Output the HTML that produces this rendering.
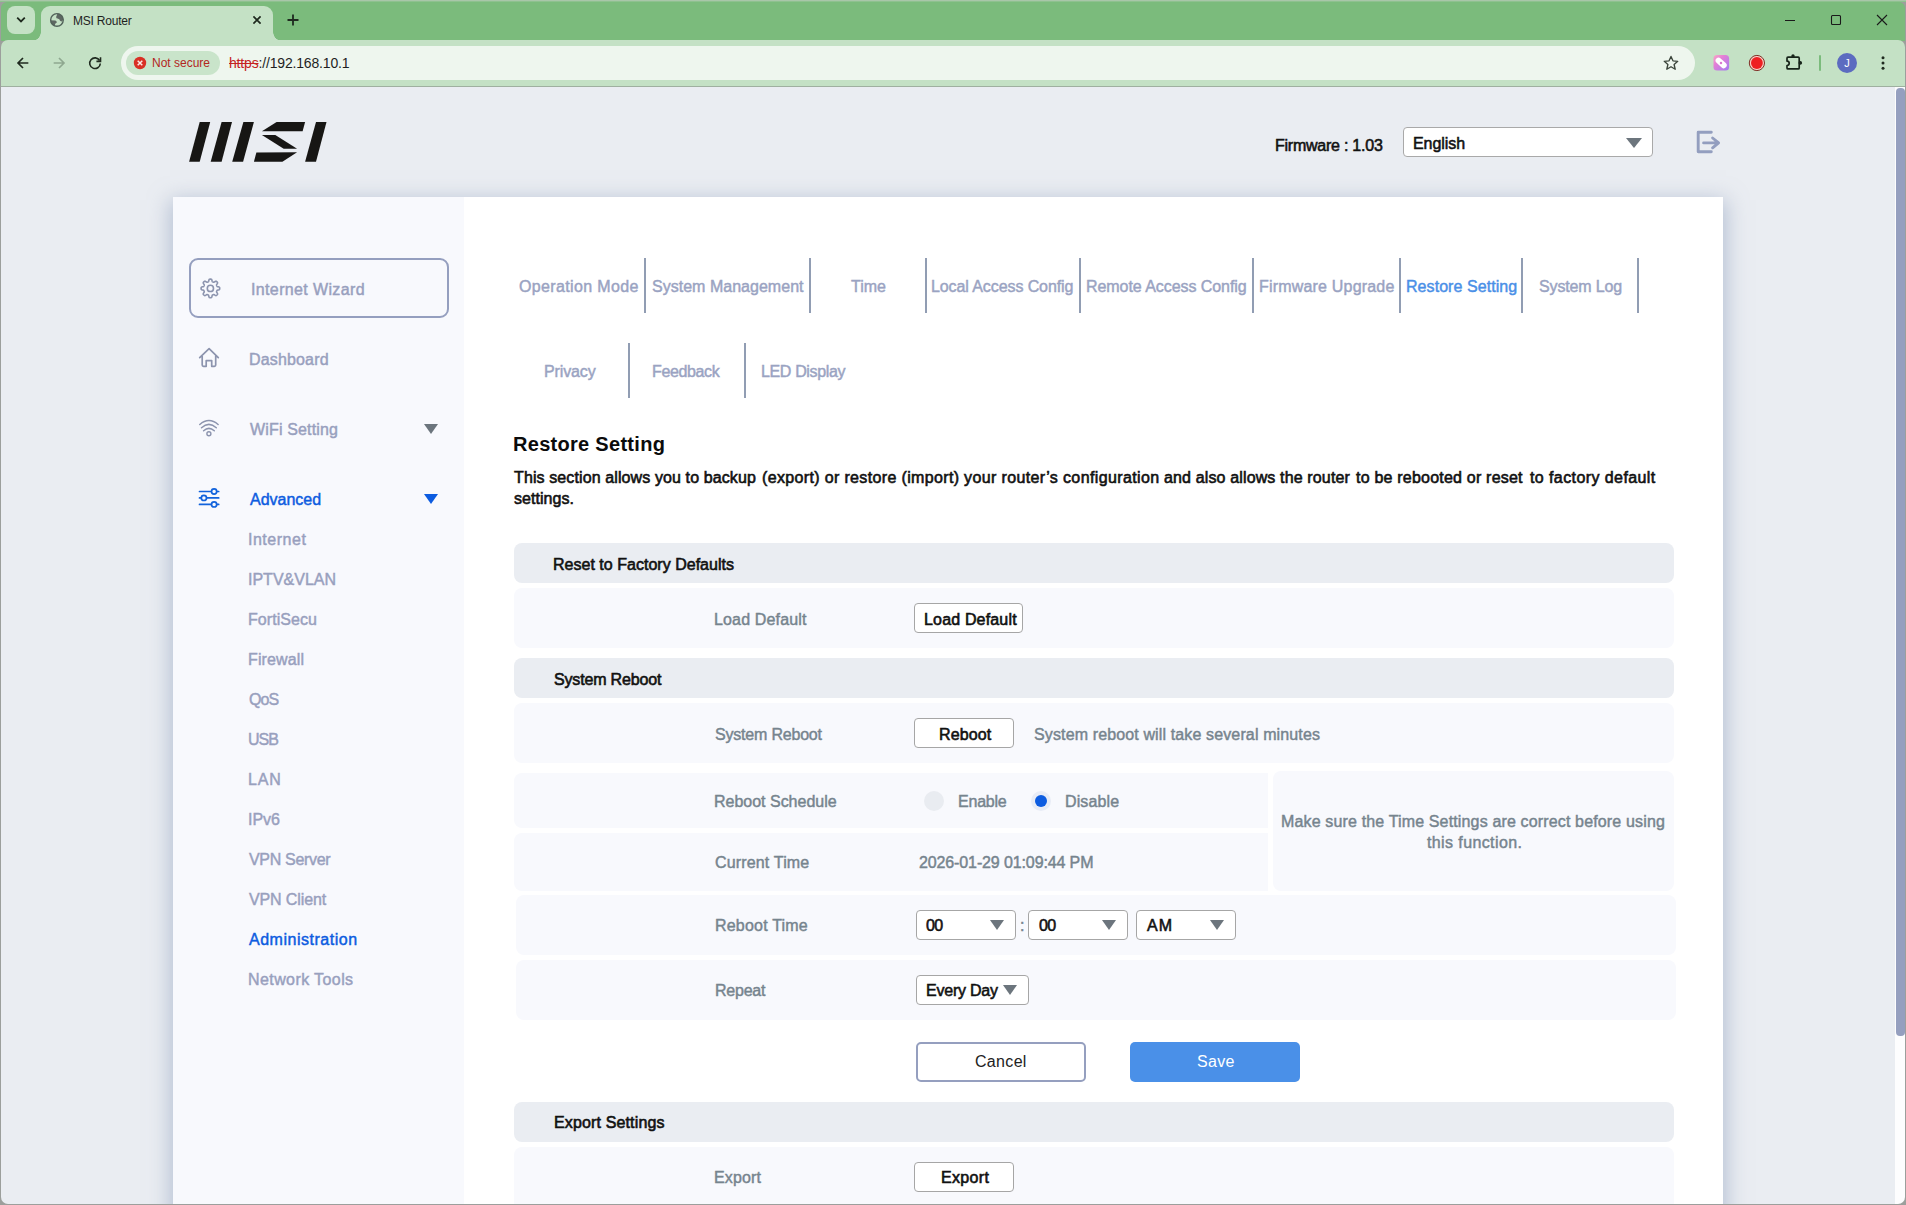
<!DOCTYPE html>
<html lang="en">
<head>
<meta charset="utf-8">
<title>MSI Router</title>
<style>
*{box-sizing:border-box;margin:0;padding:0}
html,body{width:1906px;height:1205px;overflow:hidden;background:#9c9f9c}
body{font-family:"Liberation Sans",sans-serif;font-size:16px;color:#111;position:relative}
#win{position:absolute;left:0;top:0;width:1906px;height:1205px;overflow:hidden;clip-path:inset(2px 1px 1px 1px round 6px 6px 7px 7px)}
.abs{position:absolute}
.t{position:absolute;white-space:nowrap;font-size:16px;line-height:20px;height:20px}
/* ---------- browser chrome ---------- */
#tabstrip{position:absolute;left:0;top:0;width:1906px;height:41px;background:#7bbb7c}
#toolbar{position:absolute;left:1px;top:40px;width:1904px;height:47px;background:#c4e1c5;border-bottom:1px solid #9fb0a0;border-radius:7px 7px 0 0}
#tabsearch{position:absolute;left:7px;top:6px;width:28px;height:28px;border-radius:8px;background:#c4e1c5}
#tab{position:absolute;left:41px;top:6px;width:232px;height:35px;background:#c4e1c5;border-radius:9px 9px 0 0}
#tab:before,#tab:after{content:"";position:absolute;bottom:0;width:9px;height:9px}
#tab:before{left:-9px;background:radial-gradient(circle at 0 0,transparent 8.5px,#c4e1c5 9px)}
#tab:after{right:-9px;background:radial-gradient(circle at 100% 0,transparent 8.5px,#c4e1c5 9px)}
#omni{position:absolute;left:121px;top:46px;width:1574px;height:34px;border-radius:17px;background:#eef6ee}
#chip{position:absolute;left:126px;top:51px;width:94px;height:24px;border-radius:12px;background:#c9e4ca}
.ch{font-size:12px;line-height:16px;height:16px}
/* ---------- page ---------- */
#page{position:absolute;left:1px;top:87px;width:1894px;height:1118px;background:#eaedf2;overflow:hidden}
#sbar{position:absolute;left:1895px;top:87px;width:10px;height:1118px;background:#fdfdfe}
#thumb{position:absolute;left:1895.500px;top:88px;width:9px;height:948px;border-radius:4px;background:#959fbf}
#card{position:absolute;left:173px;top:197px;width:1550px;height:1020px;background:#fff;box-shadow:0 6px 20px 3px rgba(128,148,182,.5)}
#side{position:absolute;left:0;top:0;width:291px;height:1100px;background:#f8f9fd}
.lg{position:absolute;left:0;top:0;width:146px;height:48px;background:#171614}
.sep{position:absolute;width:2px;height:55px;background:#919db3}
.hd{position:absolute;left:341px;width:1160px;height:40px;border-radius:8px;background:#eaedf2}
.row{position:absolute;left:341px;width:1160px;height:60px;border-radius:8px;background:#f8f9fd}
.btn{position:absolute;height:30px;border:1px solid #a6a6a6;border-radius:4px;background:#fff;text-align:center;font-size:16px;line-height:28px;color:#111}
.sel{position:absolute;height:30px;border:1px solid #a6a6a6;border-radius:4px;background:#fff;font-size:16px;line-height:28px;color:#111;padding-left:10px}
</style>
</head>
<body>
<div class="abs" style="left:0;top:0;width:1906px;height:2px;background:linear-gradient(#a9c6a9 50%,#8ec18f 50%)"></div>
<div id="win">
<!--PAGE-->
<div id="page"></div>
<div id="sbar"></div><div id="thumb"></div>
<div class="abs" role="img" aria-label="MSI" title="MSI" style="left:185px;top:118px;width:146px;height:48px"><i class="lg" style="clip-path:polygon(14.7px 4.1px,25.2px 4.1px,14.7px 43.7px,4.1px 43.7px)"></i><i class="lg" style="clip-path:polygon(36.6px 4.1px,47.0px 4.1px,36.6px 43.7px,25.7px 43.7px)"></i><i class="lg" style="clip-path:polygon(58.4px 4.1px,68.9px 4.1px,58.1px 43.7px,47.2px 43.7px)"></i><i class="lg" style="clip-path:polygon(91.6px 4.1px,120.1px 4.1px,117.6px 13.3px,76.9px 13.3px)"></i><i class="lg" style="clip-path:polygon(76.9px 17.1px,90.3px 17.1px,112.1px 30.7px,98.7px 30.7px)"></i><i class="lg" style="clip-path:polygon(71.4px 34.6px,112.1px 34.3px,97.4px 43.7px,68.9px 43.7px)"></i><i class="lg" style="clip-path:polygon(131.0px 4.1px,141.5px 4.1px,131.0px 43.7px,120.1px 43.7px)"></i></div>
<div class="t" style="left:1275px;top:136px;color:#111;-webkit-text-stroke:0.55px currentColor;letter-spacing:-0.24px;">Firmware : 1.03</div>
<div class="abs" style="left:1403px;top:127px;width:250px;height:30px;border:1px solid #a9a9a9;border-radius:4px;background:#fff"></div>
<div class="t" style="left:1413px;top:134px;color:#111;-webkit-text-stroke:0.55px currentColor;letter-spacing:-0.05px;">English</div>
<div class="abs" style="left:1626px;top:138px;width:0;height:0;border-left:8px solid transparent;border-right:8px solid transparent;border-top:10px solid #6c757d"></div>
<svg class="abs" style="left:1694px;top:128px" width="30" height="30" viewBox="1694 128 30 30"><path d="M1711.300 132.200 H1698.200 V151.800 H1711.300 M1703.600 142.900 H1718.300 M1712.600 138 L1718.600 142.900 L1712.600 147.800" fill="none" stroke="#939ebf" stroke-width="2.900" stroke-linecap="round" stroke-linejoin="round"/></svg>
<div id="card"><div id="side"></div></div>
<div class="abs" style="left:189px;top:258px;width:260px;height:60px;border:2px solid #959fbf;border-radius:9px"></div>
<svg class="abs" style="left:198px;top:276px" width="24" height="24" viewBox="198 276 24 24"><path d="M210.40,279.10 L210.76,279.11 L211.13,279.17 L211.48,279.31 L211.78,279.68 L211.98,280.46 L212.12,281.23 L212.31,281.62 L212.54,281.80 L212.79,281.92 L213.04,282.03 L213.29,282.13 L213.55,282.22 L213.84,282.26 L214.25,282.11 L214.90,281.67 L215.59,281.26 L216.07,281.21 L216.42,281.36 L216.71,281.58 L216.98,281.82 L217.22,282.09 L217.44,282.38 L217.59,282.73 L217.54,283.21 L217.13,283.90 L216.69,284.55 L216.54,284.96 L216.58,285.25 L216.67,285.51 L216.77,285.76 L216.88,286.01 L217.00,286.26 L217.18,286.49 L217.57,286.68 L218.34,286.82 L219.12,287.02 L219.49,287.32 L219.63,287.67 L219.69,288.04 L219.70,288.40 L219.69,288.76 L219.63,289.13 L219.49,289.48 L219.12,289.78 L218.34,289.98 L217.57,290.12 L217.18,290.31 L217.00,290.54 L216.88,290.79 L216.77,291.04 L216.67,291.29 L216.58,291.55 L216.54,291.84 L216.69,292.25 L217.13,292.90 L217.54,293.59 L217.59,294.07 L217.44,294.42 L217.22,294.71 L216.98,294.98 L216.71,295.22 L216.42,295.44 L216.07,295.59 L215.59,295.54 L214.90,295.13 L214.25,294.69 L213.84,294.54 L213.55,294.58 L213.29,294.67 L213.04,294.77 L212.79,294.88 L212.54,295.00 L212.31,295.18 L212.12,295.57 L211.98,296.34 L211.78,297.12 L211.48,297.49 L211.13,297.63 L210.76,297.69 L210.40,297.70 L210.04,297.69 L209.67,297.63 L209.32,297.49 L209.02,297.12 L208.82,296.34 L208.68,295.57 L208.49,295.18 L208.26,295.00 L208.01,294.88 L207.76,294.77 L207.51,294.67 L207.25,294.58 L206.96,294.54 L206.55,294.69 L205.90,295.13 L205.21,295.54 L204.73,295.59 L204.38,295.44 L204.09,295.22 L203.82,294.98 L203.58,294.71 L203.36,294.42 L203.21,294.07 L203.26,293.59 L203.67,292.90 L204.11,292.25 L204.26,291.84 L204.22,291.55 L204.13,291.29 L204.03,291.04 L203.92,290.79 L203.80,290.54 L203.62,290.31 L203.23,290.12 L202.46,289.98 L201.68,289.78 L201.31,289.48 L201.17,289.13 L201.11,288.76 L201.10,288.40 L201.11,288.04 L201.17,287.67 L201.31,287.32 L201.68,287.02 L202.46,286.82 L203.23,286.68 L203.62,286.49 L203.80,286.26 L203.92,286.01 L204.03,285.76 L204.13,285.51 L204.22,285.25 L204.26,284.96 L204.11,284.55 L203.67,283.90 L203.26,283.21 L203.21,282.73 L203.36,282.38 L203.58,282.09 L203.82,281.82 L204.09,281.58 L204.38,281.36 L204.73,281.21 L205.21,281.26 L205.90,281.67 L206.55,282.11 L206.96,282.26 L207.25,282.22 L207.51,282.13 L207.76,282.03 L208.01,281.92 L208.26,281.80 L208.49,281.62 L208.68,281.23 L208.82,280.46 L209.02,279.68 L209.32,279.31 L209.67,279.17 L210.04,279.11Z" fill="none" stroke="#8c94ae" stroke-width="1.600" stroke-linejoin="round"/><circle cx="210.400" cy="288.400" r="3.100" fill="none" stroke="#8c94ae" stroke-width="1.600"/></svg>
<div class="t" style="left:251px;top:280px;color:#98a0be;-webkit-text-stroke:0.45px currentColor;letter-spacing:0.36px;">Internet Wizard</div>
<svg class="abs" style="left:196px;top:345px" width="26" height="26" viewBox="196 345 26 26"><path d="M199.700 357.700 L209.100 348.700 L218.300 357.700 M202.200 356.300 V365 Q202.200 366.300 203.500 366.300 H206.200 V360.600 H211.700 V366.300 H214.400 Q215.700 366.300 215.700 365 V356.300" fill="none" stroke="#8c94ae" stroke-width="1.700" stroke-linejoin="round" stroke-linecap="round"/></svg>
<div class="t" style="left:249px;top:350px;color:#98a0be;-webkit-text-stroke:0.45px currentColor;letter-spacing:0.16px;">Dashboard</div>
<svg class="abs" style="left:196px;top:416px" width="26" height="26" viewBox="196 416 26 26"><g fill="none" stroke="#8c94ae" stroke-width="1.500" stroke-linecap="round"><path d="M199.800 424.500 Q208.900 416.600 218.100 424.500"/><path d="M201.500 427.700 Q208.900 421 216.300 427.700"/><path d="M203.600 430.700 Q208.900 426 214.300 430.700"/><circle cx="208.900" cy="433.700" r="2" stroke-width="1.400"/></g></svg>
<div class="t" style="left:250px;top:420px;color:#98a0be;-webkit-text-stroke:0.45px currentColor;letter-spacing:0.15px;">WiFi Setting</div>
<div class="abs" style="left:424px;top:424px;width:0;height:0;border-left:7.5px solid transparent;border-right:7.5px solid transparent;border-top:10px solid #6c757d"></div>
<svg class="abs" style="left:196px;top:486px" width="26" height="26" viewBox="196 486 26 26"><g fill="#f8f9fd" stroke="#1263dc" stroke-width="1.700" stroke-linecap="round"><path d="M199.500 491.500 H218.700 M199.500 497.900 H218.700 M199.500 504.400 H218.700"/><circle cx="214.100" cy="491.500" r="2.600"/><circle cx="203.900" cy="497.900" r="2.600"/><circle cx="214.100" cy="504.400" r="2.600"/></g></svg>
<div class="t" style="left:250px;top:490px;color:#0d5ce0;-webkit-text-stroke:0.45px currentColor;">Advanced</div>
<div class="abs" style="left:424px;top:494px;width:0;height:0;border-left:7.5px solid transparent;border-right:7.5px solid transparent;border-top:10px solid #0d5ce0"></div>
<div class="t" style="left:248px;top:530px;color:#98a0be;-webkit-text-stroke:0.45px currentColor;letter-spacing:0.51px;">Internet</div>
<div class="t" style="left:248px;top:570px;color:#98a0be;-webkit-text-stroke:0.45px currentColor;">IPTV&amp;VLAN</div>
<div class="t" style="left:248px;top:610px;color:#98a0be;-webkit-text-stroke:0.45px currentColor;letter-spacing:0.06px;">FortiSecu</div>
<div class="t" style="left:248px;top:650px;color:#98a0be;-webkit-text-stroke:0.45px currentColor;letter-spacing:0.13px;">Firewall</div>
<div class="t" style="left:249px;top:690px;color:#98a0be;-webkit-text-stroke:0.45px currentColor;letter-spacing:-0.95px;">QoS</div>
<div class="t" style="left:248px;top:730px;color:#98a0be;-webkit-text-stroke:0.45px currentColor;letter-spacing:-1.00px;">USB</div>
<div class="t" style="left:248px;top:770px;color:#98a0be;-webkit-text-stroke:0.45px currentColor;letter-spacing:0.90px;">LAN</div>
<div class="t" style="left:248px;top:810px;color:#98a0be;-webkit-text-stroke:0.45px currentColor;letter-spacing:-0.07px;">IPv6</div>
<div class="t" style="left:249px;top:850px;color:#98a0be;-webkit-text-stroke:0.45px currentColor;letter-spacing:-0.32px;">VPN Server</div>
<div class="t" style="left:249px;top:890px;color:#98a0be;-webkit-text-stroke:0.45px currentColor;letter-spacing:-0.12px;">VPN Client</div>
<div class="t" style="left:249px;top:930px;color:#0d5ce0;-webkit-text-stroke:0.45px currentColor;letter-spacing:0.52px;">Administration</div>
<div class="t" style="left:248px;top:970px;color:#98a0be;-webkit-text-stroke:0.45px currentColor;letter-spacing:0.41px;">Network Tools</div>
<div class="t" style="left:519px;top:277px;color:#9aa3c2;-webkit-text-stroke:0.45px currentColor;letter-spacing:0.35px;">Operation Mode</div>
<div class="sep" style="left:644px;top:258px"></div>
<div class="t" style="left:652px;top:277px;color:#9aa3c2;-webkit-text-stroke:0.45px currentColor;letter-spacing:0.02px;">System Management</div>
<div class="sep" style="left:809px;top:258px"></div>
<div class="t" style="left:851px;top:277px;color:#9aa3c2;-webkit-text-stroke:0.45px currentColor;letter-spacing:-0.03px;">Time</div>
<div class="sep" style="left:925px;top:258px"></div>
<div class="t" style="left:931px;top:277px;color:#9aa3c2;-webkit-text-stroke:0.45px currentColor;letter-spacing:-0.09px;">Local Access Config</div>
<div class="sep" style="left:1079px;top:258px"></div>
<div class="t" style="left:1086px;top:277px;color:#9aa3c2;-webkit-text-stroke:0.45px currentColor;letter-spacing:-0.06px;">Remote Access Config</div>
<div class="sep" style="left:1252px;top:258px"></div>
<div class="t" style="left:1259px;top:277px;color:#9aa3c2;-webkit-text-stroke:0.45px currentColor;letter-spacing:0.19px;">Firmware Upgrade</div>
<div class="sep" style="left:1399px;top:258px"></div>
<div class="t" style="left:1406px;top:277px;color:#4a8fe7;-webkit-text-stroke:0.45px currentColor;letter-spacing:0.06px;">Restore Setting</div>
<div class="sep" style="left:1521px;top:258px"></div>
<div class="t" style="left:1539px;top:277px;color:#9aa3c2;-webkit-text-stroke:0.45px currentColor;letter-spacing:-0.14px;">System Log</div>
<div class="sep" style="left:1637px;top:258px"></div>
<div class="t" style="left:544px;top:362px;color:#9aa3c2;-webkit-text-stroke:0.45px currentColor;letter-spacing:-0.12px;">Privacy</div>
<div class="sep" style="left:628px;top:343px"></div>
<div class="t" style="left:652px;top:362px;color:#9aa3c2;-webkit-text-stroke:0.45px currentColor;letter-spacing:-0.37px;">Feedback</div>
<div class="sep" style="left:744px;top:343px"></div>
<div class="t" style="left:761px;top:362px;color:#9aa3c2;-webkit-text-stroke:0.45px currentColor;letter-spacing:-0.36px;">LED Display</div>
<div class="t" style="left:513px;top:431px;color:#0b0b0b;font-size:20px;line-height:26px;height:26px;font-weight:700;letter-spacing:0.29px;">Restore Setting</div>
<div class="t" style="left:514px;top:468px;color:#111;-webkit-text-stroke:0.6px currentColor;letter-spacing:0.11px;">This section allows you to backup</div>
<div class="t" style="left:762px;top:468px;color:#111;-webkit-text-stroke:0.6px currentColor;letter-spacing:0.35px;">(export) or restore (import)</div>
<div class="t" style="left:964px;top:468px;color:#111;-webkit-text-stroke:0.6px currentColor;letter-spacing:0.38px;">your router&#8217;s configuration</div>
<div class="t" style="left:1164px;top:468px;color:#111;-webkit-text-stroke:0.6px currentColor;letter-spacing:0.14px;">and also allows the router</div>
<div class="t" style="left:1356px;top:468px;color:#111;-webkit-text-stroke:0.6px currentColor;letter-spacing:0.21px;">to be rebooted or reset</div>
<div class="t" style="left:1530px;top:468px;color:#111;-webkit-text-stroke:0.6px currentColor;letter-spacing:0.41px;">to factory default</div>
<div class="t" style="left:514px;top:489px;color:#111;-webkit-text-stroke:0.6px currentColor;letter-spacing:0.04px;">settings.</div>
<div class="hd abs" style="left:514px;top:543px;width:1160px;height:40px;"></div>
<div class="t" style="left:553px;top:555px;color:#111;-webkit-text-stroke:0.6px currentColor;letter-spacing:0.02px;">Reset to Factory Defaults</div>
<div class="row abs" style="left:514px;top:588px;width:1160px;height:60px;"></div>
<div class="t" style="left:714px;top:610px;color:#76848e;-webkit-text-stroke:0.45px currentColor;letter-spacing:0.15px;">Load Default</div>
<div class="btn" style="left:914px;top:603px;width:109px;height:30px"></div>
<div class="t" style="left:924px;top:610px;color:#111;-webkit-text-stroke:0.6px currentColor;letter-spacing:0.17px;">Load Default</div>
<div class="hd abs" style="left:514px;top:658px;width:1160px;height:40px;"></div>
<div class="t" style="left:554px;top:670px;color:#111;-webkit-text-stroke:0.6px currentColor;letter-spacing:-0.17px;">System Reboot</div>
<div class="row abs" style="left:514px;top:703px;width:1160px;height:60px;"></div>
<div class="t" style="left:715px;top:725px;color:#76848e;-webkit-text-stroke:0.45px currentColor;letter-spacing:-0.20px;">System Reboot</div>
<div class="btn" style="left:914px;top:718px;width:100px;height:30px"></div>
<div class="t" style="left:939px;top:725px;color:#111;-webkit-text-stroke:0.6px currentColor;letter-spacing:0.12px;">Reboot</div>
<div class="t" style="left:1034px;top:725px;color:#76848e;-webkit-text-stroke:0.45px currentColor;letter-spacing:0.13px;">System reboot will take several minutes</div>
<div class="row abs" style="left:514px;top:773px;width:754px;height:55px;border-radius:8px 0 0 8px;"></div>
<div class="t" style="left:714px;top:792px;color:#76848e;-webkit-text-stroke:0.45px currentColor;letter-spacing:-0.01px;">Reboot Schedule</div>
<div class="abs" style="left:924px;top:791px;width:20px;height:20px;border-radius:50%;background:#e9ecf1"></div>
<div class="t" style="left:958px;top:792px;color:#76848e;-webkit-text-stroke:0.45px currentColor;letter-spacing:-0.22px;">Enable</div>
<div class="abs" style="left:1031px;top:791px;width:20px;height:20px;border-radius:50%;background:#e8ecf6"></div>
<div class="abs" style="left:1035px;top:795px;width:12px;height:12px;border-radius:50%;background:#0d5ce0"></div>
<div class="t" style="left:1065px;top:792px;color:#76848e;-webkit-text-stroke:0.45px currentColor;letter-spacing:0.13px;">Disable</div>
<div class="row abs" style="left:514px;top:833px;width:754px;height:58px;border-radius:8px 0 0 8px;"></div>
<div class="t" style="left:715px;top:853px;color:#76848e;-webkit-text-stroke:0.45px currentColor;letter-spacing:0.16px;">Current Time</div>
<div class="t" style="left:919px;top:853px;color:#76848e;-webkit-text-stroke:0.45px currentColor;letter-spacing:-0.12px;">2026-01-29 01:09:44 PM</div>
<div class="row abs" style="left:1273px;top:771px;width:401px;height:120px;"></div>
<div class="t" style="left:1281px;top:812px;color:#76848e;-webkit-text-stroke:0.45px currentColor;letter-spacing:0.15px;">Make sure the Time Settings are correct before using</div>
<div class="t" style="left:1427px;top:833px;color:#76848e;-webkit-text-stroke:0.45px currentColor;letter-spacing:0.39px;">this function.</div>
<div class="row abs" style="left:516px;top:895px;width:1160px;height:60px;"></div>
<div class="t" style="left:715px;top:916px;color:#76848e;-webkit-text-stroke:0.45px currentColor;letter-spacing:0.20px;">Reboot Time</div>
<div class="sel" style="left:916px;top:910px;width:100px;height:30px"></div>
<div class="t" style="left:926px;top:916px;color:#111;-webkit-text-stroke:0.55px currentColor;letter-spacing:-0.70px;">00</div>
<div class="abs" style="left:990px;top:920px;width:0;height:0;border-left:7.5px solid transparent;border-right:7.5px solid transparent;border-top:10px solid #6c757d"></div>
<div class="t" style="left:1020px;top:916px;color:#76848e;-webkit-text-stroke:0.45px currentColor;">:</div>
<div class="sel" style="left:1028px;top:910px;width:100px;height:30px"></div>
<div class="t" style="left:1039px;top:916px;color:#111;-webkit-text-stroke:0.55px currentColor;letter-spacing:-0.70px;">00</div>
<div class="abs" style="left:1102px;top:920px;width:0;height:0;border-left:7.5px solid transparent;border-right:7.5px solid transparent;border-top:10px solid #6c757d"></div>
<div class="sel" style="left:1136px;top:910px;width:100px;height:30px"></div>
<div class="t" style="left:1147px;top:916px;color:#111;-webkit-text-stroke:0.55px currentColor;letter-spacing:1.00px;">AM</div>
<div class="abs" style="left:1210px;top:920px;width:0;height:0;border-left:7.5px solid transparent;border-right:7.5px solid transparent;border-top:10px solid #6c757d"></div>
<div class="row abs" style="left:516px;top:960px;width:1160px;height:60px;"></div>
<div class="t" style="left:715px;top:981px;color:#76848e;-webkit-text-stroke:0.45px currentColor;letter-spacing:-0.24px;">Repeat</div>
<div class="sel" style="left:916px;top:975px;width:113px;height:29.5px"></div>
<div class="t" style="left:926px;top:981px;color:#111;-webkit-text-stroke:0.55px currentColor;letter-spacing:-0.23px;">Every Day</div>
<div class="abs" style="left:1003px;top:985px;width:0;height:0;border-left:7.5px solid transparent;border-right:7.5px solid transparent;border-top:10px solid #6c757d"></div>
<div class="abs" style="left:916px;top:1042px;width:170px;height:40px;border:2px solid #959fbf;border-radius:5px;background:#fff"></div>
<div class="t" style="left:975px;top:1052px;color:#222;letter-spacing:0.32px;">Cancel</div>
<div class="abs" style="left:1130px;top:1042px;width:170px;height:40px;border-radius:5px;background:#4a90e8"></div>
<div class="t" style="left:1197px;top:1052px;color:#fff;letter-spacing:0.30px;">Save</div>
<div class="hd abs" style="left:514px;top:1102px;width:1160px;height:40px;"></div>
<div class="t" style="left:554px;top:1113px;color:#111;-webkit-text-stroke:0.6px currentColor;letter-spacing:0.14px;">Export Settings</div>
<div class="row abs" style="left:514px;top:1147px;width:1160px;height:70px;"></div>
<div class="t" style="left:714px;top:1168px;color:#76848e;-webkit-text-stroke:0.45px currentColor;letter-spacing:0.14px;">Export</div>
<div class="btn" style="left:914px;top:1162px;width:100px;height:30px"></div>
<div class="t" style="left:941px;top:1168px;color:#111;-webkit-text-stroke:0.6px currentColor;letter-spacing:0.34px;">Export</div>
<!--CHROME-->
<div id="tabstrip"></div>
<div id="toolbar"></div>
<div id="tabsearch"></div>
<svg class="abs" style="left:14px;top:14px" width="14" height="12" viewBox="0 0 14 12"><path d="M3.2 3.6 L7 7.4 L10.8 3.6" fill="none" stroke="#1f2a1f" stroke-width="1.8"/></svg>
<div id="tab"></div>
<svg class="abs" style="left:47px;top:10px" width="20" height="20" viewBox="47 10 20 20"><defs><clipPath id="gc"><circle cx="56.950" cy="19.950" r="6.600"/></clipPath></defs><g clip-path="url(#gc)" fill="#5d6762"><path d="M57.700 13 L56.200 16.800 Q56 18.400 57.600 18.600 L59.300 19.300 Q59.800 21.600 61.600 21.400 L63.600 19.600 L65 24 L66 14 L60 11 Z"/><path d="M50 20.300 L55.300 20.500 Q57 21.200 56.800 22.600 Q55 23.400 55 24.600 L54.700 27.500 L49 27 Z"/></g><circle cx="56.950" cy="19.950" r="6.300" fill="none" stroke="#52635a" stroke-width="1.400"/></svg>
<div class="t ch" style="left:73px;top:13px;color:#1f1f1f;letter-spacing:-.22px">MSI Router</div>
<svg class="abs" style="left:251px;top:14px" width="12" height="12" viewBox="0 0 12 12"><path d="M2.400 2.400 L9.600 9.600 M9.600 2.400 L2.400 9.600" stroke="#1f2a1f" stroke-width="1.700"/></svg>
<svg class="abs" style="left:286px;top:13px" width="14" height="14" viewBox="0 0 14 14"><path d="M7 1.500 V12.500 M1.500 7 H12.500" stroke="#1f2a1f" stroke-width="1.8"/></svg>
<!-- window controls -->
<svg class="abs" style="left:1783px;top:13px" width="14" height="14" viewBox="0 0 14 14"><path d="M2 7.500 H12" stroke="#1a1a1a" stroke-width="1.100"/></svg>
<svg class="abs" style="left:1829px;top:13px" width="14" height="14" viewBox="0 0 14 14"><rect x="2.500" y="2.500" width="9" height="9" rx="1" fill="none" stroke="#1a1a1a" stroke-width="1.100"/></svg>
<svg class="abs" style="left:1875px;top:13px" width="14" height="14" viewBox="0 0 14 14"><path d="M2 2 L12 12 M12 2 L2 12" stroke="#1a1a1a" stroke-width="1.100"/></svg>
<!-- nav buttons -->
<svg class="abs" style="left:15px;top:55px" width="16" height="16" viewBox="0 0 18 18"><path d="M15 9 H4 M9 3.400 L3.400 9 L9 14.600" fill="none" stroke="#1f2a1f" stroke-width="1.900"/></svg>
<svg class="abs" style="left:51px;top:55px" width="16" height="16" viewBox="0 0 18 18"><path d="M3 9 H14 M9 3.400 L14.600 9 L9 14.600" fill="none" stroke="#8fa890" stroke-width="1.900"/></svg>
<svg class="abs" style="left:87px;top:55px" width="16" height="16" viewBox="0 0 18 18"><path d="M14.200 6.200 A6 6 0 1 0 15 9.600" fill="none" stroke="#1f2a1f" stroke-width="1.800"/><path d="M15.200 2.600 V7.200 H10.600" fill="none" stroke="#1f2a1f" stroke-width="1.800"/></svg>
<div id="omni"></div>
<div id="chip"></div>
<svg class="abs" style="left:133px;top:56px" width="14" height="14" viewBox="0 0 14 14"><circle cx="7" cy="7" r="6.200" fill="#d93025"/><path d="M4.700 4.700 L9.300 9.300 M9.300 4.700 L4.700 9.300" stroke="#fbe9e7" stroke-width="1.500"/></svg>
<div class="t ch" style="left:152px;top:55px;color:#b3261e">Not secure</div>
<div class="t" style="left:229px;top:53px;font-size:14px;letter-spacing:-.17px;color:#1f1f1f"><span style="color:#c5221f;text-decoration:line-through">https</span>://192.168.10.1</div>
<svg class="abs" style="left:1661px;top:53px" width="20" height="20" viewBox="-10 -10 20 20"><path d="M0 -6.600 L1.950 -2.150 L6.750 -1.700 L3.100 1.500 L4.200 6.250 L0 3.750 L-4.200 6.250 L-3.100 1.500 L-6.750 -1.700 L-1.950 -2.150 Z" fill="none" stroke="#3c463c" stroke-width="1.350" stroke-linejoin="round"/></svg>
<!-- extensions -->
<svg class="abs" style="left:1710px;top:52px" width="22" height="22" viewBox="1710 52 22 22"><defs><linearGradient id="eg" x1="0" y1="0" x2="1" y2="1"><stop offset="0" stop-color="#f7a9c4"/><stop offset=".35" stop-color="#e57fd6"/><stop offset="1" stop-color="#9f7cf0"/></linearGradient></defs><rect x="1713.500" y="55" width="15.600" height="15.600" rx="3.600" fill="url(#eg)"/><path d="M1718.600 60.600 L1723.700 65.300" stroke="#fff" stroke-width="6" stroke-linecap="round"/><circle cx="1721" cy="62.900" r="1.250" fill="#d97bd0"/></svg>
<svg class="abs" style="left:1746px;top:52px" width="22" height="22" viewBox="1746 52 22 22"><circle cx="1756.900" cy="63" r="7.600" fill="#f9cfc6" stroke="#7e2d24" stroke-width="1"/><circle cx="1756.900" cy="63" r="5.900" fill="#ee1f22"/></svg>
<svg class="abs" style="left:1782px;top:51px" width="24" height="24" viewBox="1782 51 24 24"><path d="M1787 61.100 V58.200 Q1787 57.200 1788 57.200 H1798.200 Q1799.200 57.200 1799.200 58.200 V67.900 Q1799.200 68.900 1798.200 68.900 H1788 Q1787 68.900 1787 67.900 V65.500 A2.200 2.200 0 0 0 1787 61.100 Z" fill="none" stroke="#17241a" stroke-width="1.700" stroke-linejoin="round"/><circle cx="1793" cy="56" r="1.700" fill="#17241a"/><circle cx="1800.300" cy="62.900" r="1.800" fill="#17241a"/></svg>
<div class="abs" style="left:1819px;top:55px;width:2px;height:16px;background:#7bbb7c;border-radius:1px"></div>
<div class="abs" style="left:1837px;top:53px;width:20px;height:20px;border-radius:10px;background:#5c6bc0;color:#fff;font-size:11px;line-height:20px;text-align:center">J</div>
<svg class="abs" style="left:1879px;top:54px" width="8" height="18" viewBox="0 0 8 18"><circle cx="4" cy="3.800" r="1.500" fill="#1f2a1f"/><circle cx="4" cy="9" r="1.500" fill="#1f2a1f"/><circle cx="4" cy="14.200" r="1.500" fill="#1f2a1f"/></svg>
</div>
</body>
</html>
